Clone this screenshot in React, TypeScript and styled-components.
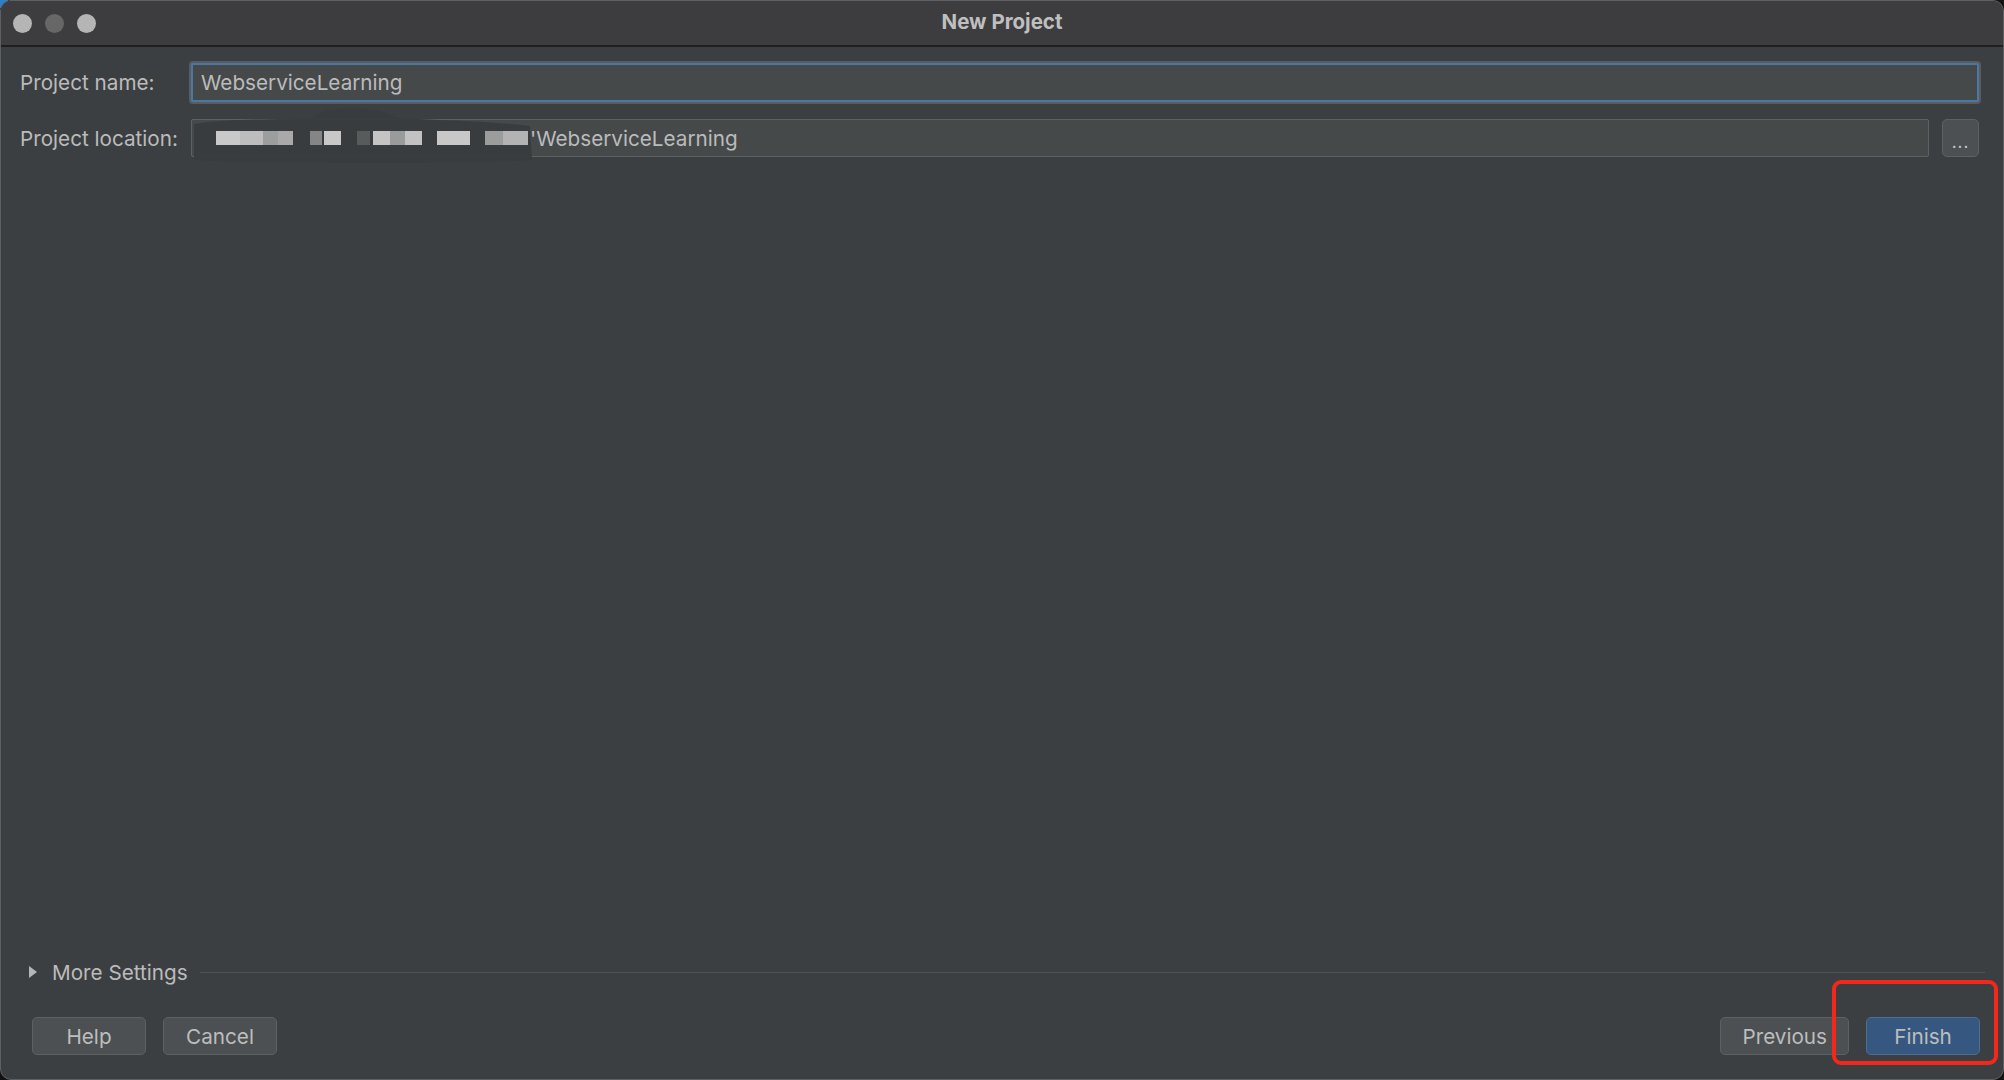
import styled, { createGlobalStyle } from 'styled-components';

const GlobalStyle = createGlobalStyle`
  html, body {
    margin: 0;
    padding: 0;
    background: linear-gradient(135deg, #2f7fc8 0 6px, #121212 6px);
  }
  body {
    font-family: Inter, "Noto Sans", "Liberation Sans", sans-serif;
  }
  #root {
    width: 2004px;
    height: 1080px;
  }
`;

const Window = styled.div`
  position: relative;
  width: 2004px;
  height: 1080px;
  box-sizing: border-box;
  display: flex;
  flex-direction: column;
  background: #3c3f41;
  border: 1px solid #5e5f61;
  border-radius: 11px;
  overflow: hidden;
  color: #bbbbbb;
  font-size: 20.7px;
`;

const TitleBar = styled.div`
  flex: none;
  height: 44px;
  display: grid;
  grid-template-columns: 1fr auto 1fr;
  align-items: center;
  background: #3d3d3f;
  border-bottom: 2px solid #1f1f20;
`;

const Lights = styled.div`
  display: flex;
  gap: 13px;
  padding-left: 12px;
`;

const Light = styled.span<{ $dim?: boolean }>`
  width: 19px;
  height: 19px;
  border-radius: 50%;
  background: ${(p) => (p.$dim ? '#676767' : '#b5b5b5')};
`;

const Title = styled.div`
  padding-bottom: 3px;
  font-size: 20.5px;
  font-weight: 700;
  color: #bfbfbf;
`;

const Content = styled.div`
  padding: 16px 24px 0 19px;
  display: grid;
  grid-template-columns: 171px 1fr;
  row-gap: 17px;
  align-items: center;
`;

const Label = styled.label`
  color: #bbbbbb;
`;

const NameField = styled.div`
  height: 39px;
  box-sizing: border-box;
  display: flex;
  align-items: center;
  padding-left: 8px;
  color: #bbbbbb;
  background: #45494a;
  border: 2px solid #4a77a3;
  border-radius: 2px;
  box-shadow: 0 0 0 2px #585c5e;
`;

const LocationRow = styled.div`
  display: flex;
  gap: 13px;
  align-items: center;
`;

const LocationField = styled.div`
  position: relative;
  flex: 1;
  height: 38px;
  box-sizing: border-box;
  display: flex;
  align-items: center;
  padding-left: 8px;
  color: #bbbbbb;
  background: #45494a;
  border: 1px solid #5f6264;
  border-radius: 2px;
`;

const Redaction = styled.svg`
  flex: none;
  overflow: visible;
`;

const BrowseButton = styled.button`
  width: 37px;
  height: 38px;
  box-sizing: border-box;
  padding: 8px 0 0;
  font-family: inherit;
  font-size: 17px;
  letter-spacing: 1px;
  color: #c4c4c4;
  background: #4c5052;
  border: 1px solid #5e6162;
  border-radius: 5px;
`;

const Footer = styled.div`
  margin-top: auto;
  padding-bottom: 24px;
`;

const MoreRow = styled.div`
  height: 24px;
  display: flex;
  align-items: center;
  padding: 0 18px 0 28px;
`;

const Caret = styled.span`
  width: 0;
  height: 0;
  border-top: 6px solid transparent;
  border-bottom: 6px solid transparent;
  border-left: 8px solid #b6b6b6;
  margin-right: 15px;
`;

const MoreText = styled.span`
  color: #bbbbbb;
`;

const Separator = styled.div`
  flex: 1;
  height: 1px;
  margin-left: 12px;
  background: #4f5355;
`;

const ButtonRow = styled.div`
  margin-top: 33px;
  display: flex;
  align-items: center;
  padding: 0 23px 0 31px;
`;

const Group = styled.div`
  display: flex;
  gap: 17px;
`;

const Spacer = styled.div`
  flex: 1;
`;

const Button = styled.button<{ $primary?: boolean }>`
  min-width: 114px;
  height: 38px;
  box-sizing: border-box;
  padding: 0 21px;
  font-family: inherit;
  font-size: 20.7px;
  color: #bdbdbd;
  background: ${(p) => (p.$primary ? '#365880' : '#4c5052')};
  border: 1px solid ${(p) => (p.$primary ? '#4b6e92' : '#5e6162')};
  border-radius: 5px;
`;

const Highlight = styled.div`
  position: absolute;
  left: 1831px;
  top: 979px;
  width: 166px;
  height: 85px;
  box-sizing: border-box;
  border: 4px solid #f3271b;
  border-radius: 9px;
  pointer-events: none;
`;

const blocks = [
  { x: 16, w: 24, c: '#c9c9c9' },
  { x: 40, w: 23, c: '#bdbdbd' },
  { x: 63, w: 15, c: '#9c9d9d' },
  { x: 78, w: 15, c: '#a9a9a9' },
  { x: 110, w: 12, c: '#838586' },
  { x: 124, w: 17, c: '#c8c8c8' },
  { x: 157, w: 13, c: '#585b5c' },
  { x: 173, w: 17, c: '#c4c4c4' },
  { x: 190, w: 15, c: '#999a9a' },
  { x: 205, w: 17, c: '#c2c2c2' },
  { x: 237, w: 33, c: '#c8c8c8' },
  { x: 285, w: 18, c: '#9b9c9c' },
  { x: 303, w: 25, c: '#b3b3b3' },
];

const PathRedaction = () => (
  <Redaction width="330" height="36" viewBox="0 0 330 36">
    <path
      d="M-6 4 C30 -2 90 0 112 -2 C122 -14 178 -16 196 -2 C240 0 300 2 330 6 L332 40 C250 44 60 44 -6 40 Z"
      fill="#393c3e"
      opacity="0.95"
    />
    {blocks.map((b) => (
      <rect key={b.x} x={b.x} y={11} width={b.w} height={14} fill={b.c} />
    ))}
  </Redaction>
);

export default function App() {
  return (
    <>
      <GlobalStyle />
      <Window>
        <TitleBar>
          <Lights>
            <Light />
            <Light $dim />
            <Light />
          </Lights>
          <Title>New Project</Title>
          <div />
        </TitleBar>

        <Content>
          <Label>Project name:</Label>
          <NameField>WebserviceLearning</NameField>

          <Label>Project location:</Label>
          <LocationRow>
            <LocationField>
              <PathRedaction />
              <span>'WebserviceLearning</span>
            </LocationField>
            <BrowseButton>...</BrowseButton>
          </LocationRow>
        </Content>

        <Footer>
          <MoreRow>
            <Caret />
            <MoreText>More Settings</MoreText>
            <Separator />
          </MoreRow>
          <ButtonRow>
            <Group>
              <Button>Help</Button>
              <Button>Cancel</Button>
            </Group>
            <Spacer />
            <Group>
              <Button>Previous</Button>
              <Button $primary>Finish</Button>
            </Group>
          </ButtonRow>
        </Footer>

        <Highlight />
      </Window>
    </>
  );
}
